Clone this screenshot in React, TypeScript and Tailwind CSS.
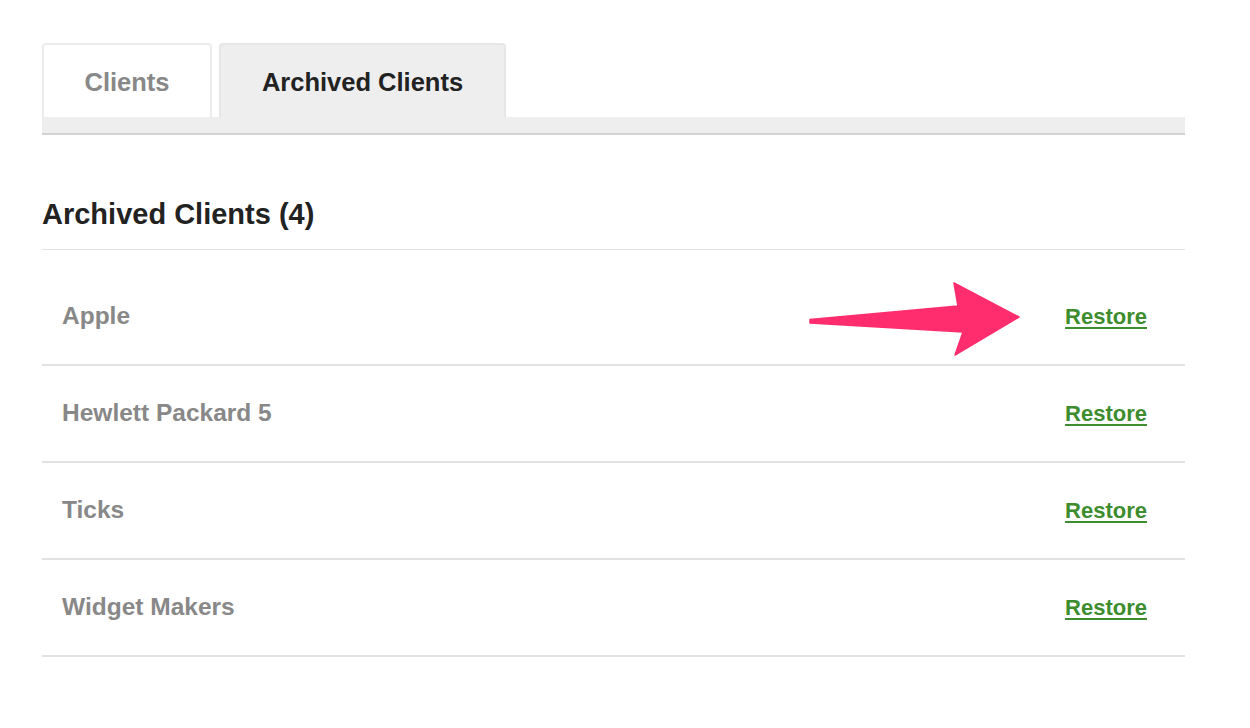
import React from "react";

const rows = ["Apple", "Hewlett Packard 5", "Ticks", "Widget Makers"];

export default function App() {
  return (
    <div
      className="relative min-h-[728px] w-[1250px] bg-white"
      style={{ fontFamily: '"Liberation Sans", Arial, Helvetica, sans-serif' }}
    >
      <div className="ml-[42px] w-[1143px] pt-[43px]">
        <div className="flex items-end gap-[7px]">
          <div className="flex h-[74px] w-[170px] items-center justify-center rounded-t-[4px] border-2 border-b-0 border-[#ececec] bg-white pt-[2px] text-[25.5px] font-bold text-[#888888]">
            Clients
          </div>
          <div className="flex h-[74px] w-[287px] items-center justify-center rounded-t-[4px] border-2 border-b-0 border-[#e6e6e6] bg-[#eeeeee] pt-[2px] text-[25.5px] font-bold text-[#222222]">
            Archived Clients
          </div>
        </div>
        <div className="h-[18px] border-b-2 border-[#d2d2d2] bg-[#eeeeee]" />
        <div className="mt-[62px] border-b border-[#e2e2e2] pb-[18px]">
          <h2 className="text-[29px] leading-[34px] font-bold text-[#222222]">
            Archived Clients (4)
          </h2>
        </div>
        <div className="mt-[19px]">
          {rows.map((name) => (
            <div
              key={name}
              className="flex h-[97px] items-center justify-between border-b-2 border-[#e2e2e2] pl-[20px] pr-[38px]"
            >
              <span className="text-[24.5px] font-bold text-[#888888]">{name}</span>
              <a
                href="#"
                className="text-[22px] font-bold text-[#3d8c2e] underline decoration-2 underline-offset-[3px]"
              >
                Restore
              </a>
            </div>
          ))}
        </div>
      </div>
      <svg
        className="pointer-events-none absolute left-0 top-0"
        width="1250"
        height="728"
        viewBox="0 0 1250 728"
      >
        <polygon
          points="810,319.5 958,306 954,283 1019,317 955,355 963,332 810,323"
          fill="#ff2d6e"
          stroke="#ff2d6e"
          strokeWidth="1.5"
          strokeLinejoin="round"
        />
      </svg>
    </div>
  );
}
